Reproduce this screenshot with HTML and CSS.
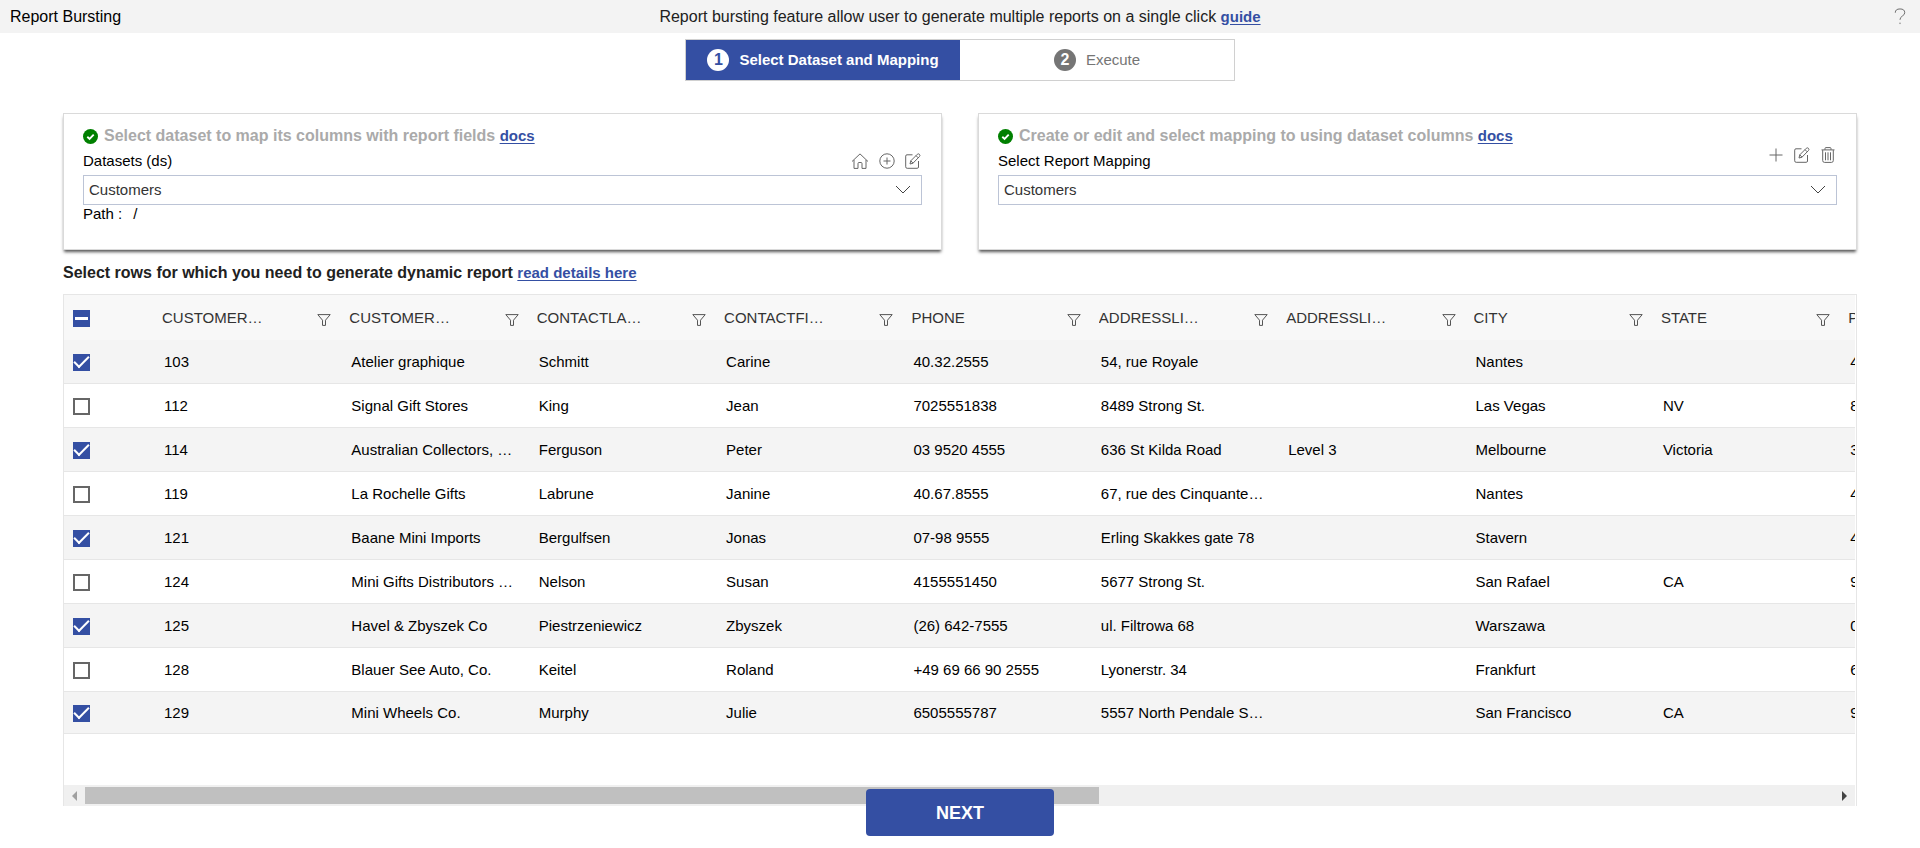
FILE: index.html
```html
<!DOCTYPE html>
<html lang="en">
<head>
<meta charset="utf-8">
<title>Report Bursting</title>
<link rel="stylesheet" href="styles.css">
</head>
<body>
<svg class="symbols" aria-hidden="true">
  <symbol id="i-check" viewBox="0 0 16 16"><circle cx="8" cy="8" r="8" fill="#008000"/><path d="M4.6 8.3l2.4 2.3 4.4-4.6" fill="none" stroke="#fff" stroke-width="2"/></symbol>
  <symbol id="i-home" viewBox="0 0 18 16"><path d="M1 8.5L9 .9l8 7.6M3 7v8.4h4V10.500q0-1 1-1h2q1 0 1 1v4.900h4V7"/></symbol>
  <symbol id="i-add" viewBox="0 0 16 16"><circle cx="8" cy="8" r="7.200"/><path d="M8 4.500v7M4.500 8h7"/></symbol>
  <symbol id="i-edit" viewBox="0 0 16 16"><path d="M7.500 1.800H2q-1.300 0-1.300 1.300v10.700q0 1.500 1.500 1.500h10q1.300 0 1.300-1.300V8M5 11l.8-3.200L12.300 1.300q1-1 2.100 0t.1 2.200L8 10.200zM11 2.600l2.200 2.200M5.800 7.800L8 10.200"/></symbol>
  <symbol id="i-plus" viewBox="0 0 16 16"><path d="M8 1.500v13M1.500 8h13"/></symbol>
  <symbol id="i-trash" viewBox="0 0 16 16"><path d="M1.500 2.900h13M5 2.800V1.500q0-.9 1-.9h4q1 0 1 .9V2.800M2.700 3.100V13.500q0 1.900 1.800 1.900h7q1.800 0 1.800-1.900V3.100M5.500 5.300v8M8 5.300v8M10.500 5.300v8"/></symbol>
  <symbol id="i-down" viewBox="0 0 16 10"><path d="M1 1l7 7 7-7"/></symbol>
  <symbol id="i-filter" viewBox="0 0 14 12"><path d="M.8.600h12.400L8.500 6.200v5.200H5.500V6.200z"/></symbol>
</svg>

<header class="topbar">
  <h1 class="topbar-title">Report Bursting</h1>
  <p class="topbar-info">Report bursting feature allow user to generate multiple reports on a single click <a class="link" href="#">guide</a></p>
  <button class="icon-btn help" type="button" aria-label="Help"><svg class="icon" viewBox="0 0 14 18"><path d="M2 5q0-4 5-4t5 4q0 2-2.500 3.500T7 12.500M7 15.500v1.500"/></svg></button>
</header>

<main class="page">
  <nav class="steps">
    <button class="step step-active" type="button"><span class="step-number">1</span>Select Dataset and Mapping</button>
    <button class="step" type="button"><span class="step-number">2</span>Execute</button>
  </nav>

  <div class="cards">
    <section class="card">
      <h2 class="card-title"><svg class="status"><use href="#i-check"/></svg><span>Select dataset to map its columns with report fields <a class="link" href="#">docs</a></span></h2>
      <div class="field-head">
        <label for="dataset">Datasets (ds)</label>
        <div class="tools">
          <button class="icon-btn" type="button" aria-label="Home"><svg class="icon icon-wide"><use href="#i-home"/></svg></button>
          <button class="icon-btn" type="button" aria-label="Add dataset"><svg class="icon"><use href="#i-add"/></svg></button>
          <button class="icon-btn" type="button" aria-label="Edit dataset"><svg class="icon"><use href="#i-edit"/></svg></button>
        </div>
      </div>
      <div class="select-box"><select id="dataset"><option>Customers</option></select><svg class="chevron"><use href="#i-down"/></svg></div>
      <p class="path"><span>Path :</span><span>/</span></p>
    </section>
    <section class="card">
      <h2 class="card-title"><svg class="status"><use href="#i-check"/></svg><span>Create or edit and select mapping to using dataset columns <a class="link" href="#">docs</a></span></h2>
      <div class="field-head">
        <label for="mapping">Select Report Mapping</label>
        <div class="tools tools-top">
          <button class="icon-btn" type="button" aria-label="Add mapping"><svg class="icon"><use href="#i-plus"/></svg></button>
          <button class="icon-btn" type="button" aria-label="Edit mapping"><svg class="icon"><use href="#i-edit"/></svg></button>
          <button class="icon-btn" type="button" aria-label="Delete mapping"><svg class="icon"><use href="#i-trash"/></svg></button>
        </div>
      </div>
      <div class="select-box"><select id="mapping"><option>Customers</option></select><svg class="chevron"><use href="#i-down"/></svg></div>
    </section>
  </div>

  <h2 class="rows-title">Select rows for which you need to generate dynamic report <a class="link" href="#">read details here</a></h2>

  <div class="grid">
    <div class="grid-view">
      <table class="grid-table">
        <thead>
          <tr>
            <th class="pick"><input class="box box-mixed" type="checkbox" aria-label="Select all rows"></th>
            <th><div class="head"><span class="head-text">CUSTOMERNUMBER</span><svg class="filter"><use href="#i-filter"/></svg></div></th>
            <th><div class="head"><span class="head-text">CUSTOMERNAME</span><svg class="filter"><use href="#i-filter"/></svg></div></th>
            <th><div class="head"><span class="head-text">CONTACTLASTNAME</span><svg class="filter"><use href="#i-filter"/></svg></div></th>
            <th><div class="head"><span class="head-text">CONTACTFIRSTNAME</span><svg class="filter"><use href="#i-filter"/></svg></div></th>
            <th><div class="head"><span class="head-text">PHONE</span><svg class="filter"><use href="#i-filter"/></svg></div></th>
            <th><div class="head"><span class="head-text">ADDRESSLINE1</span><svg class="filter"><use href="#i-filter"/></svg></div></th>
            <th><div class="head"><span class="head-text">ADDRESSLINE2</span><svg class="filter"><use href="#i-filter"/></svg></div></th>
            <th><div class="head"><span class="head-text">CITY</span><svg class="filter"><use href="#i-filter"/></svg></div></th>
            <th><div class="head"><span class="head-text">STATE</span><svg class="filter"><use href="#i-filter"/></svg></div></th>
            <th><div class="head"><span class="head-text">POSTALCODE</span></div></th>
            <th></th>
          </tr>
        </thead>
        <tbody>
          <tr><td class="pick"><input class="box" type="checkbox" aria-label="Select 103" checked></td><td>103</td><td>Atelier graphique</td><td>Schmitt</td><td>Carine</td><td>40.32.2555</td><td>54, rue Royale</td><td></td><td>Nantes</td><td></td><td>44000</td><td></td></tr>
          <tr><td class="pick"><input class="box" type="checkbox" aria-label="Select 112"></td><td>112</td><td>Signal Gift Stores</td><td>King</td><td>Jean</td><td>7025551838</td><td>8489 Strong St.</td><td></td><td>Las Vegas</td><td>NV</td><td>83030</td><td></td></tr>
          <tr><td class="pick"><input class="box" type="checkbox" aria-label="Select 114" checked></td><td>114</td><td>Australian Collectors, Co.</td><td>Ferguson</td><td>Peter</td><td>03 9520 4555</td><td>636 St Kilda Road</td><td>Level 3</td><td>Melbourne</td><td>Victoria</td><td>3004</td><td></td></tr>
          <tr><td class="pick"><input class="box" type="checkbox" aria-label="Select 119"></td><td>119</td><td>La Rochelle Gifts</td><td>Labrune</td><td>Janine</td><td>40.67.8555</td><td>67, rue des Cinquante Otages</td><td></td><td>Nantes</td><td></td><td>44000</td><td></td></tr>
          <tr><td class="pick"><input class="box" type="checkbox" aria-label="Select 121" checked></td><td>121</td><td>Baane Mini Imports</td><td>Bergulfsen</td><td>Jonas</td><td>07-98 9555</td><td>Erling Skakkes gate 78</td><td></td><td>Stavern</td><td></td><td>4110</td><td></td></tr>
          <tr><td class="pick"><input class="box" type="checkbox" aria-label="Select 124"></td><td>124</td><td>Mini Gifts Distributors Ltd.</td><td>Nelson</td><td>Susan</td><td>4155551450</td><td>5677 Strong St.</td><td></td><td>San Rafael</td><td>CA</td><td>97562</td><td></td></tr>
          <tr><td class="pick"><input class="box" type="checkbox" aria-label="Select 125" checked></td><td>125</td><td>Havel &amp; Zbyszek Co</td><td>Piestrzeniewicz</td><td>Zbyszek</td><td>(26) 642-7555</td><td>ul. Filtrowa 68</td><td></td><td>Warszawa</td><td></td><td>01-012</td><td></td></tr>
          <tr><td class="pick"><input class="box" type="checkbox" aria-label="Select 128"></td><td>128</td><td>Blauer See Auto, Co.</td><td>Keitel</td><td>Roland</td><td>+49 69 66 90 2555</td><td>Lyonerstr. 34</td><td></td><td>Frankfurt</td><td></td><td>60528</td><td></td></tr>
          <tr><td class="pick"><input class="box" type="checkbox" aria-label="Select 129" checked></td><td>129</td><td>Mini Wheels Co.</td><td>Murphy</td><td>Julie</td><td>6505555787</td><td>5557 North Pendale Street</td><td></td><td>San Francisco</td><td>CA</td><td>94217</td><td></td></tr>
        </tbody>
      </table>
    </div>
    <div class="scrollbar">
      <span class="arrow arrow-left"></span>
      <div class="track"><div class="thumb"></div></div>
      <span class="arrow arrow-right"></span>
    </div>
  </div>

  <button class="next" type="button">NEXT</button>
</main>
</body>
</html>
```
FILE: styles.css
```css
* { box-sizing: border-box; }
body {
  margin: 0;
  background: #fff;
  color: #000;
  font: 15px/20px "Liberation Sans", Arial, sans-serif;
}
h1, h2, p { margin: 0; font-size: 16px; }
button, select { font: inherit; color: inherit; }
.symbols { position: absolute; width: 0; height: 0; }
.link { color: #344fa3; font-size: 15px; font-weight: 700; text-underline-offset: 2px; }

.icon { width: 16px; height: 16px; display: block; fill: none; stroke: #666; stroke-width: 1; }
.icon-wide { width: 18px; }
.icon-btn { padding: 0; border: 0; background: none; }

.topbar {
  display: grid;
  grid-template-columns: 1fr auto 1fr;
  align-items: center;
  height: 33px;
  padding: 0 10px;
  background: #f3f3f3;
}
.topbar-title { font-weight: 400; }
.topbar-info { color: #212121; }
.help { justify-self: end; }
.help .icon { width: 14px; height: 17px; margin-right: 3px; }

.page { padding: 6px 63px 0; }
.steps {
  display: flex;
  width: 550px;
  margin: 0 auto 32px;
  border: 1px solid #d0d0d0;
}
.step {
  flex: 1;
  display: flex;
  align-items: center;
  justify-content: center;
  gap: 10px;
  height: 40px;
  padding: 0;
  border: 0;
  background: #fff;
  color: #757575;
}
.step-active { background: #344fa3; color: #fff; font-weight: 700; }
.step-number {
  width: 22px;
  border-radius: 50%;
  background: #757575;
  color: #fff;
  font-size: 16px;
  font-weight: 700;
  line-height: 22px;
}
.step-active .step-number { background: #fff; color: #344fa3; }

.cards { display: grid; grid-template-columns: 1fr 1fr; gap: 36px; }
.card {
  min-height: 137px;
  padding: 11px 19px;
  border: 1px solid #dadada;
  box-shadow: 0 3px 3px -1px #555;
}
.card-title { display: flex; align-items: center; gap: 6px; height: 22px; color: #aaa; }
.status { width: 15px; height: 15px; }
.field-head { display: flex; align-items: center; justify-content: space-between; height: 28px; }
.tools { display: flex; gap: 10px; padding-right: 1px; }
.tools-top { align-self: flex-start; }
.select-box { display: grid; align-items: center; }
.select-box > * { grid-area: 1 / 1; }
.select-box select {
  width: 100%;
  height: 30px;
  padding: 0 5px;
  border: 1px solid #bcc4d6;
  border-radius: 0;
  background: #fff;
  color: #333;
  appearance: none;
}
.chevron {
  justify-self: end;
  width: 16px;
  height: 10px;
  margin-right: 11px;
  fill: none;
  stroke: #444;
  pointer-events: none;
}
.path { display: flex; gap: 11px; font-size: 15px; line-height: 18px; }

.rows-title { padding: 13px 0 11px; color: #212121; }

.grid { border: 1px solid #e6e6e6; border-bottom: 0; padding-right: 1px; }
.grid-view { height: 490px; overflow: hidden; }
.grid-table { width: 2151px; border-collapse: separate; border-spacing: 0; table-layout: fixed; }
.grid-table th {
  height: 45px;
  padding: 0 10px 0 8px;
  background: #f8f8f8;
  color: #333;
  font-weight: 400;
  text-align: left;
}
.grid-table td {
  height: 44px;
  padding: 1px 13px 0 10px;
  border-bottom: 1px solid #e6e6e6;
  overflow: hidden;
  text-overflow: ellipsis;
  white-space: nowrap;
}
.grid-table tbody tr:nth-child(odd) { background: #f4f4f4; }
.grid-table tbody tr:last-child td { height: 42px; }
.grid-table .pick { width: 90px; padding: 1px 0 0 9px; }
.head { display: flex; align-items: center; justify-content: space-between; }
.head-text { max-width: 110px; overflow: hidden; text-overflow: ellipsis; }
.filter { width: 14px; height: 12px; margin-top: 4px; fill: none; stroke: #555; }

.box {
  display: grid;
  place-content: center;
  width: 17px;
  height: 17px;
  margin: 0;
  border: 2px solid #666;
  background: #fff;
  appearance: none;
}
.box:checked, .box-mixed { border-color: #344fa3; background: #344fa3; }
.box:checked::before {
  content: "";
  width: 13px;
  height: 6px;
  margin-bottom: 4px;
  border: solid #fff;
  border-width: 0 0 2px 2px;
  transform: rotate(-45deg);
}
.box-mixed::before { content: ""; width: 13px; height: 3px; background: #fff; }

.scrollbar { display: flex; align-items: center; height: 21px; background: #f0f0f0; }
.track { flex: 1; }
.thumb { width: 58%; height: 17px; background: #c0c0c0; }
.arrow { display: grid; place-content: center; width: 21px; }
.arrow::before { content: ""; border: 5px solid transparent; }
.arrow-left::before { border-right-color: #a0a0a0; border-left-width: 0; }
.arrow-right::before { border-left-color: #444; border-right-width: 0; }

.next {
  position: fixed;
  bottom: 12px;
  left: 50%;
  width: 188px;
  height: 47px;
  border: 0;
  border-radius: 4px;
  background: #344fa3;
  color: #fff;
  font-size: 18px;
  font-weight: 700;
  transform: translateX(-50%);
}
```
